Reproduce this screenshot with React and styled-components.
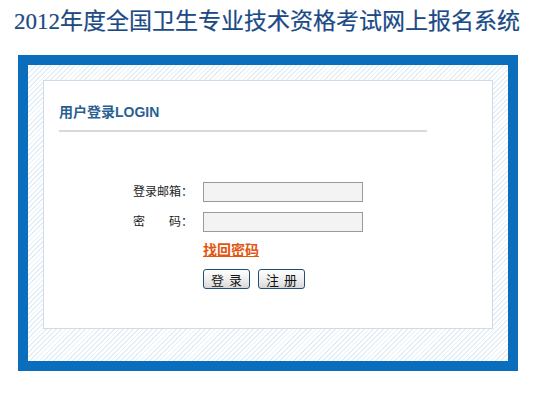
import React from 'react';
import styled, { createGlobalStyle } from 'styled-components';

const GlobalStyle = createGlobalStyle`
  body {
    margin: 0;
    background: #ffffff;
    font-family: "Liberation Sans", "Noto Sans CJK SC", sans-serif;
  }
`;

const Page = styled.div`
  width: 558px;
  height: 400px;
  overflow: hidden;
`;

const Title = styled.h1`
  margin: 0;
  padding: 7px 0 0 14px;
  height: 48px;
  box-sizing: border-box;
  font-family: "Liberation Serif", "Noto Sans CJK SC", serif;
  font-size: 23px;
  font-weight: normal;
  line-height: 29px;
  color: #1b4a86;
  -webkit-text-stroke: 0.2px #1b4a86;
`;

const Frame = styled.div`
  margin: 7px 0 0 18px;
  width: 500px;
  height: 316px;
  box-sizing: border-box;
  border: 10px solid #0b6ebc;
  padding: 15px 15px 32px;
  background: repeating-linear-gradient(
    135deg,
    #ffffff 0px,
    #ffffff 2.2px,
    #e4eef7 2.2px,
    #e4eef7 3.4px
  );
`;

const Box = styled.div`
  height: 249px;
  box-sizing: border-box;
  background: #ffffff;
  border: 1px solid #cfdbe7;
  padding: 22px 15px 0;
`;

const Heading = styled.h2`
  margin: 0;
  width: 368px;
  padding-bottom: 8px;
  border-bottom: 2px solid #d9d9d9;
  font-size: 14px;
  font-weight: bold;
  line-height: 19px;
  color: #2b5f93;
`;

const Form = styled.div`
  margin: 50px 0 0 74px;
  display: grid;
  grid-template-columns: 60px 160px;
  column-gap: 10px;
  row-gap: 10px;
  align-items: center;
`;

const Label = styled.span`
  font-size: 12px;
  color: #222222;
  white-space: pre;
  line-height: 20px;
`;

const Input = styled.input`
  width: 160px;
  height: 20px;
  box-sizing: border-box;
  margin: 0;
  border: 1px solid #9a9a9a;
  background: #f3f3f3;
  padding: 0 3px;
`;

const Link = styled.a`
  grid-column: 2;
  font-size: 14px;
  font-weight: bold;
  line-height: 18px;
  color: #e2560f;
  text-decoration: underline;
  margin-top: -1px;
`;

const Buttons = styled.div`
  grid-column: 2;
  display: flex;
  gap: 8px;
  margin-top: 0px;
`;

const Button = styled.button`
  width: 47px;
  height: 20px;
  margin: 0;
  padding: 0;
  box-sizing: border-box;
  border: 1px solid #214f7a;
  border-radius: 3px;
  background: linear-gradient(#ffffff, #ececec 60%, #d8d8d8);
  font-family: "Noto Sans CJK SC", sans-serif;
  font-size: 13px;
  line-height: 17px;
  color: #111111;
  letter-spacing: 5px;
  text-indent: 5px;
`;

export default function App() {
  return (
    <Page>
      <GlobalStyle />
      <Title>2012年度全国卫生专业技术资格考试网上报名系统</Title>
      <Frame>
        <Box>
          <Heading>用户登录LOGIN</Heading>
          <Form>
            <Label>登录邮箱：</Label>
            <Input type="text" />
            <Label>密　　码：</Label>
            <Input type="password" />
            <Link href="#">找回密码</Link>
            <Buttons>
              <Button>登录</Button>
              <Button>注册</Button>
            </Buttons>
          </Form>
        </Box>
      </Frame>
    </Page>
  );
}
